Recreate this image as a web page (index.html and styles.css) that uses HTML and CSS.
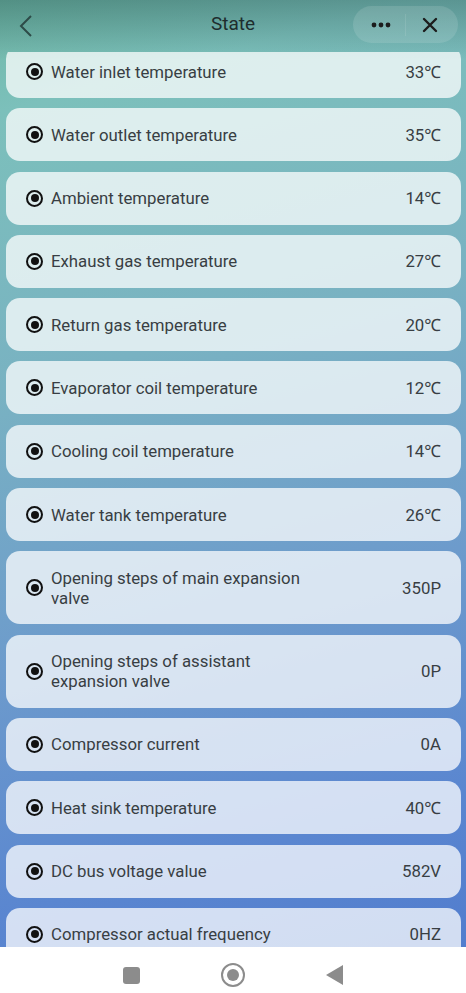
FILE: index.html
```html
<!DOCTYPE html>
<html lang="en">
<head>
  <meta charset="UTF-8">
  <meta name="viewport" content="width=device-width, initial-scale=1.0">
  <title>State</title>
  <link rel="stylesheet" href="styles.css">
</head>
<body>
  <div class="screen">
    <header class="topbar">
      <svg class="back" width="14" height="22" viewBox="0 0 14 22"><path d="M12 1 L2 11 L12 21" fill="none" stroke="#2d4b48" stroke-width="2"/></svg>
      <h1 class="title">State</h1>
      <div class="capsule">
        <div class="capsule-btn">
          <svg width="20" height="6" viewBox="0 0 20 6"><circle cx="3" cy="3" r="2.4" fill="#1c1c1c"/><circle cx="10" cy="3" r="2.4" fill="#1c1c1c"/><circle cx="17" cy="3" r="2.4" fill="#1c1c1c"/></svg>
        </div>
        <div class="capsule-sep"></div>
        <div class="capsule-btn">
          <svg width="16" height="16" viewBox="0 0 16 16"><path d="M2 2 L14 14 M14 2 L2 14" stroke="#1c1c1c" stroke-width="2.4" stroke-linecap="round"/></svg>
        </div>
      </div>
    </header>

    <main class="content">
      <ul class="list">
        <li class="row"><span class="radio"></span><span class="label">Water inlet temperature</span><span class="value">33℃</span></li>
        <li class="row"><span class="radio"></span><span class="label">Water outlet temperature</span><span class="value">35℃</span></li>
        <li class="row"><span class="radio"></span><span class="label">Ambient temperature</span><span class="value">14℃</span></li>
        <li class="row"><span class="radio"></span><span class="label">Exhaust gas temperature</span><span class="value">27℃</span></li>
        <li class="row"><span class="radio"></span><span class="label">Return gas temperature</span><span class="value">20℃</span></li>
        <li class="row"><span class="radio"></span><span class="label">Evaporator coil temperature</span><span class="value">12℃</span></li>
        <li class="row"><span class="radio"></span><span class="label">Cooling coil temperature</span><span class="value">14℃</span></li>
        <li class="row"><span class="radio"></span><span class="label">Water tank temperature</span><span class="value">26℃</span></li>
        <li class="row"><span class="radio"></span><span class="label">Opening steps of main expansion valve</span><span class="value">350P</span></li>
        <li class="row"><span class="radio"></span><span class="label">Opening steps of assistant expansion valve</span><span class="value">0P</span></li>
        <li class="row"><span class="radio"></span><span class="label">Compressor current</span><span class="value">0A</span></li>
        <li class="row"><span class="radio"></span><span class="label">Heat sink temperature</span><span class="value">40℃</span></li>
        <li class="row"><span class="radio"></span><span class="label">DC bus voltage value</span><span class="value">582V</span></li>
        <li class="row"><span class="radio"></span><span class="label">Compressor actual frequency</span><span class="value">0HZ</span></li>
      </ul>
    </main>

    <nav class="sysbar">
      <span class="sys-square"></span>
      <span class="sys-home"></span>
      <svg class="sys-back" width="17" height="20" viewBox="0 0 17 20"><path d="M17 0 L17 20 L0 10 Z" fill="#8c8c8c"/></svg>
    </nav>
  </div>
</body>
</html>
```

FILE: styles.css
```css
* {
  box-sizing: border-box;
}
html, body {
  margin: 0;
  padding: 0;
}
body {
  font-family: Roboto, "Noto Sans", "DejaVu Sans", sans-serif;
  color: #383e43;
}
.screen {
  width: 466px;
  height: 993px;
  display: flex;
  flex-direction: column;
  overflow: hidden;
  background:
    linear-gradient(180deg, rgba(30, 70, 70, 0.35) 0%, rgba(30, 70, 70, 0) 60px),
    linear-gradient(165deg, #6fb8a6 0%, #7cc0bb 10%, #79b2c2 35%, #6d9bcc 60%, #5a86d0 82%, #4f7acd 100%);
}
.topbar {
  height: 52px;
  flex-shrink: 0;
  display: flex;
  align-items: center;
  position: relative;
  padding: 0 8px 0 19px;
}
.back {
  display: block;
}
.title {
  position: absolute;
  left: 0;
  right: 0;
  top: 13px;
  margin: 0;
  text-align: center;
  font-size: 19px;
  font-weight: 400;
  line-height: 22px;
  color: #1e2c2d;
  pointer-events: none;
}
.capsule {
  margin-left: auto;
  margin-top: -3px;
  width: 105px;
  height: 37px;
  border-radius: 19px;
  background: rgba(255, 255, 255, 0.12);
  display: flex;
  align-items: center;
}
.capsule-btn {
  flex: 1;
  display: flex;
  justify-content: center;
  align-items: center;
}
.capsule-btn:first-child {
  padding-left: 4px;
}
.capsule-btn:last-child {
  padding-right: 4px;
}
.capsule-sep {
  width: 1px;
  height: 22px;
  background: rgba(255, 255, 255, 0.1);
}
.content {
  flex: 1;
  overflow: hidden;
}
.list {
  list-style: none;
  margin: -7px 5px 0 6px;
  padding: 0;
}
.row {
  display: flex;
  align-items: center;
  padding: 16.5px 20px 16.5px 20px;
  margin-bottom: 10.3px;
  border-radius: 14px;
  background: rgba(255, 255, 255, 0.74);
  font-size: 16.8px;
  line-height: 20px;
}
.radio {
  width: 17px;
  height: 17px;
  flex-shrink: 0;
  border: 2px solid #111;
  border-radius: 50%;
  position: relative;
  margin-right: 8px;
}
.radio::after {
  content: "";
  position: absolute;
  left: 2.5px;
  top: 2.5px;
  width: 8px;
  height: 8px;
  border-radius: 50%;
  background: #111;
}
.label {
  flex: 1;
  max-width: 262px;
}
.value {
  margin-left: auto;
  white-space: nowrap;
}
.sysbar {
  height: 46px;
  flex-shrink: 0;
  background: #fff;
  display: flex;
  justify-content: center;
  align-items: center;
  gap: 81px;
  padding: 10px 0 0 0;
}
.sys-square {
  width: 17px;
  height: 17px;
  border-radius: 3px;
  background: #8c8c8c;
}
.sys-home {
  width: 24px;
  height: 24px;
  border: 2.5px solid #8c8c8c;
  border-radius: 50%;
  position: relative;
}
.sys-home::after {
  content: "";
  position: absolute;
  left: 3.5px;
  top: 3.5px;
  width: 12px;
  height: 12px;
  border-radius: 50%;
  background: #8c8c8c;
}
.sys-back {
  display: block;
}
```
